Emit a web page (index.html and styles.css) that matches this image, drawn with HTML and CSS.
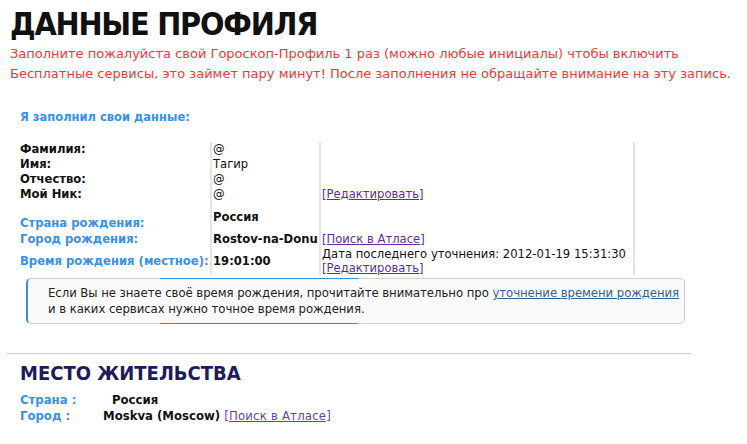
FILE: index.html
```html
<!DOCTYPE html>
<html lang="ru">
<head>
    <meta charset="UTF-8">
    <title>Данные профиля</title>
    <link rel="stylesheet" href="styles.css">
</head>
<body>
    <h1 class="title">ДАННЫЕ ПРОФИЛЯ</h1>
    <p class="warn">Заполните пожалуйста свой Гороскоп-Профиль 1 раз (можно любые инициалы) чтобы включить<br>Бесплатные сервисы, это займет пару минут! После заполнения не обращайте внимание на эту запись.</p>

    <div class="filled">Я заполнил свои данные:</div>

    <table class="profile">
        <tr><td class="lbl">Фамилия:</td><td class="val">@</td><td class="act"></td></tr>
        <tr><td class="lbl">Имя:</td><td class="val">Тагир</td><td class="act"></td></tr>
        <tr><td class="lbl">Отчество:</td><td class="val">@</td><td class="act"></td></tr>
        <tr><td class="lbl">Мой Ник:</td><td class="val">@</td><td class="act"><a href="#">[Редактировать]</a></td></tr>
        <tr>
            <td class="lbl blue low">Страна рождения:</td>
            <td class="val bold mid">Россия</td>
            <td class="act"></td>
        </tr>
        <tr><td class="lbl blue">Город рождения:</td><td class="val bold">Rostov-na-Donu</td><td class="act"><a href="#">[Поиск в Атласе]</a></td></tr>
        <tr>
            <td class="lbl blue">Время рождения (местное):</td>
            <td class="val bold">19:01:00</td>
            <td class="act last">Дата последнего уточнения: 2012-01-19 15:31:30<br><a href="#">[Редактировать]</a></td>
        </tr>
    </table>

    <div class="note">
        Если Вы не знаете своё время рождения, прочитайте внимательно про <a href="#">уточнение времени рождения</a><br>
        и в каких сервисах нужно точное время рождения.
    </div>

    <hr class="sep">

    <h2 class="place">МЕСТО ЖИТЕЛЬСТВА</h2>
    <div class="home">
        <div class="row"><span class="key">Страна :</span><span class="country">Россия</span></div>
        <div class="row"><span class="key">Город :</span><span class="city">Moskva (Moscow)</span> <a href="#">[Поиск в Атласе]</a></div>
    </div>
</body>
</html>
```

FILE: styles.css
```css
body {
    margin: 0;
    padding: 0 10px;
    font-family: "DejaVu Sans", Verdana, sans-serif;
    color: #111;
}
a { color: #5a2f9a; }

.title {
    font-family: "DejaVu Sans Condensed", Tahoma, sans-serif;
    font-size: 32px;
    font-weight: bold;
    letter-spacing: -1.2px;
    margin: 0;
    padding-top: 5px;
    line-height: 38px;
}
.warn {
    color: #f03838;
    font-size: 13px;
    line-height: 20px;
    margin: 1px 0 0 0;
}
.filled {
    color: #3a8fe8;
    font-size: 11.5px;
    font-weight: bold;
    margin: 26px 0 0 10px;
}
.profile {
    border-collapse: collapse;
    margin: 18px 0 0 10px;
    font-size: 11.6px;
}
.profile td {
    padding: 0;
    line-height: 15px;
    vertical-align: middle;
    white-space: nowrap;
}
.profile .lbl { width: 190px; font-weight: bold; }
.profile .val { width: 106px; border-left: 2px solid #e4e4e4; padding-left: 1px; }
.profile .act { width: 311px; border-left: 2px solid #e4e4e4; border-right: 2px solid #e4e4e4; padding-left: 1px; }
.profile .last { line-height: 14px; }
.profile .low { vertical-align: top; padding: 14px 0 1px 0; }
.profile .mid { vertical-align: top; padding-top: 8px; }
.blue { color: #3a8fe8; }
.bold { font-weight: bold; }

.note {
    position: relative;
    margin: 3px 0 0 16px;
    width: 636px;
    padding: 6px 0 6px 20px;
    background: #fafafa;
    border: 1px solid #cfcfcf;
    border-left: 2px solid #3a8fd8;
    border-radius: 5px;
    font-family: "DejaVu Sans Condensed", Tahoma, sans-serif;
    font-size: 13px;
    letter-spacing: -0.05px;
    line-height: 16px;
    color: #222;
}
.note a { color: #2f6496; }
.note::before,
.note::after {
    content: "";
    position: absolute;
    left: 132px;
    width: 198px;
    height: 1px;
    background: #3a8fd8;
}
.note::before { top: -1px; }
.note::after { bottom: -1px; }

.sep {
    margin: 29px 0 0 -3px;
    width: 684px;
    border: 0;
    border-top: 1px solid #cccccc;
}
.place {
    margin: 7px 0 0 10px;
    font-family: "DejaVu Sans Condensed", Tahoma, sans-serif;
    font-size: 20px;
    font-weight: bold;
    color: #1d1b5c;
    line-height: 24px;
}
.home {
    margin: 7px 0 0 10px;
    font-family: "DejaVu Sans Condensed", Tahoma, sans-serif;
    font-size: 13px;
    font-weight: bold;
}
.home .row { height: 16px; line-height: 16px; }
.home .key { color: #3a8fe8; display: inline-block; width: 83px; }
.home .country { padding-left: 9px; }
.home a { font-weight: normal; color: #6a3fa8; letter-spacing: 0.2px; }
```
